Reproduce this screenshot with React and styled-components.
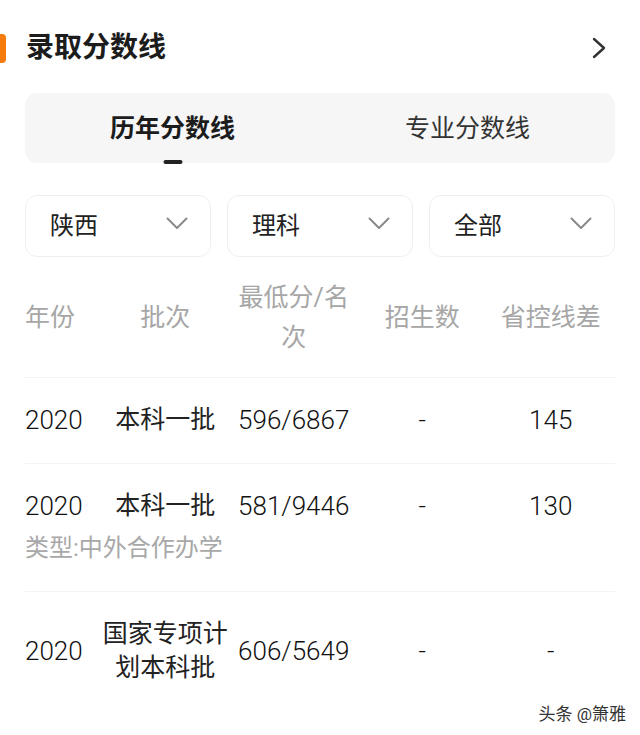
import React from "react";
import styled, { createGlobalStyle } from "styled-components";

const GlobalStyle = createGlobalStyle`
  html, body {
    margin: 0;
    padding: 0;
    background: #fff;
    overflow: hidden;
  }
  body {
    font-family: Roboto, "Noto Sans CJK SC", "Noto Sans", sans-serif;
    color: #222;
  }
`;

const Page = styled.div`
  position: relative;
  width: 640px;
  height: 735px;
  box-sizing: border-box;
  padding-top: 29px;
`;

const TitleBar = styled.div`
  display: flex;
  align-items: center;
  height: 38px;
  padding-right: 34px;
`;

const Accent = styled.span`
  width: 6px;
  height: 29px;
  margin-right: 20px;
  border-radius: 0 4px 4px 0;
  background: #f57c0c;
`;

const Title = styled.h2`
  margin: 0;
  font-size: 28px;
  line-height: 38px;
  font-weight: 700;
  color: #1c1c1c;
`;

const More = styled.svg`
  margin-left: auto;
`;

const Body = styled.div`
  padding: 0 25px;
`;

const Tabs = styled.div`
  display: grid;
  grid-template-columns: 1fr 1fr;
  height: 70px;
  margin-top: 26px;
  border-radius: 12px;
  background: #f6f6f6;
`;

const Tab = styled.div`
  position: relative;
  display: flex;
  align-items: center;
  justify-content: center;
  padding-bottom: 4px;
  font-size: 25px;
  font-weight: ${(p) => (p.$active ? 700 : 400)};
  color: ${(p) => (p.$active ? "#1c1c1c" : "#333")};

  &::after {
    content: "";
    display: ${(p) => (p.$active ? "block" : "none")};
    position: absolute;
    bottom: -1px;
    left: 50%;
    width: 19px;
    height: 4px;
    border-radius: 2px;
    transform: translateX(-50%);
    background: #222;
  }
`;

const Filters = styled.div`
  display: grid;
  grid-template-columns: repeat(3, 1fr);
  gap: 16px;
  margin-top: 32px;
`;

const Select = styled.div`
  display: flex;
  align-items: center;
  justify-content: space-between;
  height: 62px;
  box-sizing: border-box;
  padding: 0 22px 5px 24px;
  border: 1px solid #efefef;
  border-radius: 12px;
  font-size: 24px;
  color: #222;
`;

const Row = styled.div`
  display: grid;
  grid-template-columns: 76px repeat(4, 1fr);
  align-items: center;
  font-size: 25px;
  border-bottom: 1px solid #f3f3f3;

  &:last-child {
    border-bottom: none;
  }
`;

const HeadRow = styled(Row)`
  margin-top: 1px;
  padding: 20px 0 19px;
  line-height: 40px;
  color: #a6a6a6;
`;

const DataRow = styled(Row)`
  padding: 25px 0 26px;
  line-height: 34px;
  color: #222;
`;

const Cell = styled.div`
  text-align: ${(p) => (p.$left ? "left" : "center")};
`;

const Num = styled(Cell)`
  font-size: 26px;
  font-weight: 300;
  color: #111;
`;

const Note = styled.div`
  grid-column: 1 / -1;
  margin-top: 8px;
  font-size: 24px;
  color: #a8a8a8;
`;

const Watermark = styled.div`
  position: absolute;
  right: 14px;
  top: 700px;
  font-size: 17px;
  color: #333;
  text-shadow: 0 0 2px #fff, 0 0 2px #fff;
`;

const ChevronDown = () => (
  <svg width="22" height="13" viewBox="0 0 22 13">
    <path d="M1.5 1.5 L11 11 L20.5 1.5" fill="none" stroke="#8a8a8a" strokeWidth="2" strokeLinecap="round" strokeLinejoin="round" />
  </svg>
);

const filters = ["陕西", "理科", "全部"];

const rows = [
  { year: "2020", batch: "本科一批", score: "596/6867", count: "-", diff: "145" },
  { year: "2020", batch: "本科一批", score: "581/9446", count: "-", diff: "130", note: "类型:中外合作办学" },
  { year: "2020", batch: "国家专项计划本科批", score: "606/5649", count: "-", diff: "-" },
];

export default function App() {
  return (
    <Page>
      <GlobalStyle />
      <TitleBar>
        <Accent />
        <Title>录取分数线</Title>
        <More width="14" height="22" viewBox="0 0 14 22">
          <path d="M2 2 L12 11 L2 20" fill="none" stroke="#333" strokeWidth="2.4" strokeLinecap="round" strokeLinejoin="round" />
        </More>
      </TitleBar>
      <Body>
        <Tabs>
          <Tab $active>历年分数线</Tab>
          <Tab>专业分数线</Tab>
        </Tabs>
        <Filters>
          {filters.map((f) => (
            <Select key={f}>
              {f}
              <ChevronDown />
            </Select>
          ))}
        </Filters>
        <div>
          <HeadRow>
            <Cell $left>年份</Cell>
            <Cell>批次</Cell>
            <Cell>最低分/名次</Cell>
            <Cell>招生数</Cell>
            <Cell>省控线差</Cell>
          </HeadRow>
          {rows.map((r, i) => (
            <DataRow key={i}>
              <Num $left>{r.year}</Num>
              <Cell>{r.batch}</Cell>
              <Num>{r.score}</Num>
              <Num>{r.count}</Num>
              <Num>{r.diff}</Num>
              {r.note && <Note>{r.note}</Note>}
            </DataRow>
          ))}
        </div>
      </Body>
      <Watermark>头条 @箫雅</Watermark>
    </Page>
  );
}
